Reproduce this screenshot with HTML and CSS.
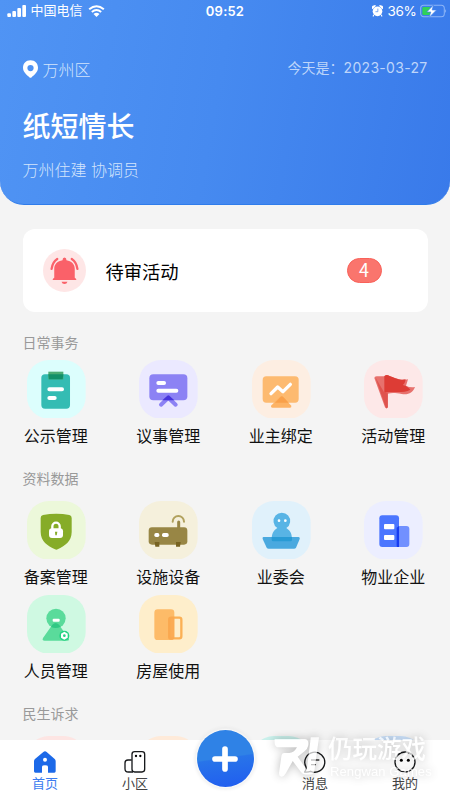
FILE: index.html
```html
<!DOCTYPE html>
<html lang="zh-CN">
<head>
<meta charset="utf-8">
<title>首页</title>
<link rel="stylesheet" href="styles.css">
</head>
<body>
<div class="app">
  <header class="hero">
    <div class="status">
      <div class="status-left">
        <svg class="signal" viewBox="0 0 57 36"><rect x="1" y="25" width="11" height="11" rx="3"/><rect x="16" y="18" width="11" height="18" rx="3"/><rect x="31" y="9" width="11" height="27" rx="3"/><rect x="46" y="0" width="11" height="36" rx="3"/></svg>
        <span class="carrier">中国电信</span>
        <svg class="wifi" viewBox="0 0 50 36"><path d="M3 13Q25-6 47 13M11 21Q25 9 39 21" fill="none" stroke="#fff" stroke-width="6"/><path d="M16 27Q25 19 34 27L25 36Z"/></svg>
      </div>
      <div class="clock">09:52</div>
      <div class="status-right">
        <svg class="alarm" viewBox="0 0 32 34"><circle cx="16" cy="18" r="14"/><path d="M1 8Q1 1 9 2L1 11M31 8Q31 1 23 2L31 11M5 28l-2 5M27 28l2 5" stroke="#fff" stroke-width="3"/><path d="M17 10v9h-7" fill="none" stroke="#4485ed" stroke-width="2"/></svg>
        <span>36%</span>
        <svg class="battery" viewBox="0 0 80 40"><rect x="2" y="3" width="70" height="34" rx="9" fill="none" stroke="#8db5f7" stroke-width="3"/><rect x="7" y="8" width="24" height="24" rx="4" fill="#30d158"/><path d="M75 14q5 6 0 12z" fill="#a6c6fa"/><path d="M40 2L20 23h12l-5 16 22-22H36z" stroke="#4082eb" stroke-width="2"/></svg>
      </div>
    </div>
    <div class="place-row">
      <div class="place"><svg class="pin" viewBox="0 0 48 56"><path fill-rule="evenodd" d="M24 0C9 0 0 11 0 24c0 15 14 24 21 31q3 2 6 0c7-7 21-16 21-31C48 11 39 0 24 0Zm0 15a10 10 0 1 1 0 20 10 10 0 0 1 0-20Z"/></svg><span>万州区</span></div>
      <div class="date">今天是：<span>2023-03-27</span></div>
    </div>
    <h1>纸短情长</h1>
    <p class="role">万州住建 协调员</p>
  </header>

  <main>
    <section class="notice">
      <svg class="bell" viewBox="0 0 130 130"><circle cx="65" cy="65" r="65" fill="#fee6e6"/><path d="M34 87V60c0-15 10-23 25-26q0-8 6-8t6 8c15 3 25 11 25 26v27q5 2 5 7H29q0-5 5-7ZM56 99h18q-2 7-9 7t-9-7Z" fill="#fa6169"/><path d="M43 30Q29 39 26 60M87 30q14 9 17 30" fill="none" stroke="#fa6169" stroke-width="7" stroke-linecap="round"/></svg>
      <span class="notice-name">待审活动</span>
      <span class="count">4</span>
    </section>

    <section class="group first">
      <h2>日常事务</h2>
      <div class="grid">
        <div class="item"><svg class="tile" viewBox="0 0 176 176"><rect width="176" height="176" rx="65" fill="#dcfefd"/><rect x="43" y="43" width="86" height="103" rx="11" fill="#34bcb3"/><path d="M64 35h45v23H64z" fill="#4bab73"/><path d="M64 43h45l-2 15H66z" fill="#129068"/><path d="M67 88h38M67 114h16" class="line" stroke="#fff" stroke-width="12"/></svg><span>公示管理</span></div>
        <div class="item"><svg class="tile" viewBox="0 0 176 176"><rect width="176" height="176" rx="65" fill="#ebe9ff"/><rect x="31" y="43" width="114" height="78" rx="12" fill="#8c82f4"/><path d="M66 134l22-21 22 21" class="line" stroke="#8c82f4" stroke-width="12"/><path d="M70 121l15-14q3-2 6 0l15 14z" fill="#4634dc"/><path d="M58 69h17M58 92h54" class="line" stroke="#fff" stroke-width="12"/></svg><span>议事管理</span></div>
        <div class="item"><svg class="tile" viewBox="0 0 176 176"><rect width="176" height="176" rx="65" fill="#fdeee2"/><rect x="32" y="49" width="108" height="79" rx="11" fill="#fdba70"/><path d="M57 137l27-27q4-3 8 0l26 27q1 6-4 6H61q-5 0-4-6z" fill="#fdb365"/><path d="M69 128l17-18q4-2 7 0l17 18z" fill="#f9a04a"/><path d="M57 101l20-20 16 14 22-22" class="line" stroke="#fff" stroke-width="10"/></svg><span>业主绑定</span></div>
        <div class="item"><svg class="tile" viewBox="0 0 176 176"><rect width="176" height="176" rx="65" fill="#fde8e8"/><path d="M61 49q8-6 16 0c26 9 36 13 55 9l-6 19q12 7 27 4c-7 18-20 24-40 21-17-3-29-4-42-1L72 141q-4 8-9 1L31 54q0-5 7-5z" fill="#e7716d"/><path d="M61 48q7-6 16 0c23 9 33 14 48 10-3 10-3 14-9 17 12 3 18 8 23 14-17 10-42 6-64 7l-14 2z" fill="#dd3c35"/><path d="M34 52l32 93 5-2 1-43-11-2z" fill="#dc4742" opacity=".7"/></svg><span>活动管理</span></div>
      </div>
    </section>

    <section class="group">
      <h2>资料数据</h2>
      <div class="grid">
        <div class="item"><svg class="tile" viewBox="0 0 176 176"><rect width="176" height="176" rx="65" fill="#ecf8da"/><path d="M41 51q0-8 7-9 40-8 79 0 7 1 7 9v42c0 29-21 41-42 52q-4 2-8 0C62 134 41 122 41 93z" fill="#86ac28"/><rect x="66" y="82" width="42" height="29" rx="9" fill="#fff"/><path d="M76 85V76a11 11 0 0 1 22 0v9" fill="none" stroke="#fff" stroke-width="7"/><path d="M84 92h7l-2 11h-4z" fill="#86ac28"/></svg><span>备案管理</span></div>
        <div class="item"><svg class="tile" viewBox="0 0 176 176"><rect width="176" height="176" rx="65" fill="#f5f0dc"/><rect x="29" y="79" width="116" height="52" rx="10" fill="#988645"/><path d="M119 63v20" stroke="#988645" stroke-width="9" class="line"/><path d="M101 62a17 17 0 0 1 34 0" stroke="#b1a15d" stroke-width="6" class="line"/><rect x="46" y="96" width="15" height="12" rx="5" fill="#fff"/><rect x="69" y="96" width="20" height="12" rx="5" fill="#fff"/><path d="M47 123h14v14H49zM111 123h14l-2 14h-12z" fill="#776322"/></svg><span>设施设备</span></div>
        <div class="item"><svg class="tile" viewBox="0 0 176 176"><rect width="176" height="176" rx="65" fill="#e0f1fb"/><path d="M76 81a25 25 0 1 1 27 0c13 9 17 18 17 35q0 5-5 5H64q-5 0-5-5c0-17 5-28 17-35z" fill="#58b4e5"/><path d="M34 108h106q5 1 3 6l-11 26q-2 3-6 3H50q-4 0-6-3l-12-26q-2-5 2-6z" fill="#4aa9df"/><path d="M59 108h61v8q0 5-5 5H64q-5 0-5-5z" fill="#299bd5"/><circle cx="81" cy="59" r="4" fill="#fff"/><circle cx="100" cy="59" r="4" fill="#fff"/></svg><span>业委会</span></div>
        <div class="item"><svg class="tile" viewBox="0 0 176 176"><rect width="176" height="176" rx="65" fill="#eceeff"/><rect x="98" y="75" width="38" height="63" rx="9" fill="#7190ff"/><rect x="46" y="43" width="59" height="95" rx="9" fill="#4b76ff"/><path d="M98 80l7-5v63h-7z" fill="#173df1"/><rect x="60" y="69" width="31" height="16" rx="3" fill="#fff"/><rect x="60" y="102" width="31" height="15" rx="3" fill="#fff"/></svg><span>物业企业</span></div>
        <div class="item"><svg class="tile" viewBox="0 0 176 176"><rect width="176" height="176" rx="65" fill="#cff9e2"/><path d="M76 89q10-10 20 0l28 40q6 8-4 8H53q-9 0-5-8z" fill="#5adb9b"/><circle cx="87" cy="70" r="29" fill="#5adb9b"/><path d="M76 89q10-10 20 0l5 6q-14 7-29 1z" fill="#30c884"/><rect x="77" y="71" width="21" height="9" rx="3" fill="#fff"/><circle cx="112" cy="122" r="15" fill="#25d283"/><path d="M112 110l10 6v12l-10 6-10-6v-12z" fill="#fff"/><circle cx="112" cy="122" r="4" fill="#25d283"/></svg><span>人员管理</span></div>
        <div class="item"><svg class="tile" viewBox="0 0 176 176"><rect width="176" height="176" rx="65" fill="#feeecb"/><rect x="46" y="43" width="60" height="92" rx="10" fill="#fdbb68"/><rect x="91" y="68" width="36" height="62" rx="6" fill="none" stroke="#fbb055" stroke-width="7"/><path d="M87 74q0-9 9-9h10v64q-2 5-8 5h-4q-7 0-7-8z" fill="#f9a64d" opacity=".75"/></svg><span>房屋使用</span></div>
      </div>
    </section>

    <section class="group">
      <h2>民生诉求</h2>
      <div class="grid">
        <div class="item"><svg class="tile" viewBox="0 0 176 176"><rect width="176" height="176" rx="65" fill="#fde5e3"/></svg></div>
        <div class="item"><svg class="tile" viewBox="0 0 176 176"><rect width="176" height="176" rx="65" fill="#feead9"/></svg></div>
        <div class="item"><svg class="tile" viewBox="0 0 176 176"><rect width="176" height="176" rx="65" fill="#c9f0eb"/></svg></div>
        <div class="item"><svg class="tile" viewBox="0 0 176 176"><rect width="176" height="176" rx="65" fill="#c9dff8"/></svg></div>
      </div>
    </section>
  </main>

  <nav class="tabs">
    <div class="tab active"><svg viewBox="0 0 66 66"><path d="M28 3q5-4 10 0l24 21q3 3 3 7v30q0 4-4 4H42V47q0-4-9-4t-9 4v18H4q-4 0-4-4V31q0-4 3-7z" fill="#1c69e8"/><circle cx="33" cy="26" r="6" fill="#fff"/></svg><span>首页</span></div>
    <div class="tab"><svg viewBox="0 0 66 66"><path d="M27 63H13Q3 63 3 53V36q0-9 9-9h11" fill="none" stroke="#17191b" stroke-width="4"/><rect x="24" y="2" width="38" height="61" rx="8" fill="none" stroke="#17191b" stroke-width="4"/><circle cx="36" cy="15" r="3.5"/><circle cx="49" cy="15" r="3.5"/></svg><span>小区</span></div>
    <div class="tab middle"><div class="add"><svg viewBox="0 0 90 90"><path d="M45 15v60M15 45h60" class="line" stroke="#fff" stroke-width="17"/></svg></div></div>
    <div class="tab"><svg viewBox="0 0 66 66"><path d="M6 48A30 30 0 1 1 20 61Q12 64 2 63q5-6 4-15z" fill="none" stroke="#17191b" stroke-width="4"/><path d="M21 27h25M21 41h15" stroke="#333" stroke-width="4"/></svg><span>消息</span></div>
    <div class="tab"><svg viewBox="0 0 66 66"><circle cx="33" cy="33" r="30" fill="none" stroke="#17191b" stroke-width="4"/><circle cx="22" cy="28" r="4.5"/><circle cx="43" cy="28" r="4.5"/></svg><span>我的</span></div>
  </nav>

  <div class="watermark">
    <svg viewBox="0 0 140 124"><path d="M2 6h90q16 1 12 20-2 11-12 18L72 60l31 44q3 10-7 10-8 0-14-8L57 73 36 110q-9 15-18 8-4-3-2-14l7-49q2-7 8-7h15q15 0 24-17H10Q0 28 2 6ZM112 0h25l-14 102q-2 12-16 12h-9z"/></svg>
    <div class="watermark-text"><strong>仍玩游戏</strong><span>Rengwan Games</span></div>
  </div>
</div>
</body>
</html>
```
FILE: styles.css
```css
* {
  box-sizing: border-box;
}

body {
  margin: 0;
  background: #f4f4f4;
  font-family: Inter, "Noto Sans CJK SC", sans-serif;
  color: #111;
}

svg {
  display: block;
  flex: none;
}

.line {
  fill: none;
  stroke-linecap: round;
  stroke-linejoin: round;
}

.app {
  position: relative;
  display: flex;
  flex-direction: column;
  width: 450px;
  height: 800px;
  overflow: hidden;
}

.hero {
  flex: none;
  height: 205px;
  padding: 0 22.5px;
  border-bottom: 1px solid #2f7ceb;
  border-radius: 0 0 24px 24px;
  background: linear-gradient(100deg, #5094f4, #468af0 48%, #397aea);
  color: #fff;
}

.hero svg {
  fill: #fff;
}

.status {
  display: grid;
  grid-template-columns: 1fr auto 1fr;
  align-items: center;
  height: 22px;
  margin: 0 -16px;
  font-size: 13px;
}

.status-left,
.status-right {
  display: flex;
  align-items: center;
}

.status-left {
  gap: 5px;
}

.carrier {
  line-height: 20px;
  margin-top: -2px;
}

.status-right {
  justify-content: flex-end;
  gap: 4px;
  margin-right: -3px;
}

.signal {
  width: 19px;
  height: 12px;
}

.wifi {
  width: 17px;
  height: 12px;
}

.alarm {
  width: 11px;
  height: 12px;
}

.battery {
  width: 27px;
  height: 14px;
  margin-left: -1px;
}

.status-right span {
  font-size: 13.5px;
  letter-spacing: -.3px;
}

.clock {
  font-size: 13px;
  font-weight: 600;
  letter-spacing: .2px;
}

.place-row {
  display: flex;
  justify-content: space-between;
  align-items: center;
  height: 24px;
  margin-top: 35px;
}

.place {
  display: flex;
  align-items: center;
  gap: 5px;
  font-size: 16px;
  font-weight: 300;
  color: #d3e4fc;
}

.pin {
  width: 15px;
  height: 18px;
}

.date {
  margin-top: -3px;
  font-size: 14px;
  line-height: 20px;
  color: #bdd5fa;
}

.date span {
  letter-spacing: .3px;
}

h1 {
  margin: 26px 0 0;
  font-size: 28px;
  line-height: 40px;
  font-weight: 500;
}

.role {
  margin: 10.5px 0 0;
  font-size: 16px;
  line-height: 24px;
  font-weight: 300;
  color: #d3e4fc;
}

main {
  flex: 1;
  min-height: 0;
  overflow: hidden;
  padding-top: 24px;
}

.notice {
  display: flex;
  align-items: center;
  height: 83px;
  margin: 0 22.5px;
  padding: 0 46px 0 20px;
  border-radius: 12px;
  background: #fff;
}

.bell {
  width: 43px;
  height: 43px;
}

.notice-name {
  margin-left: 20px;
  font-size: 18.3px;
  color: #000;
}

.count {
  width: 35px;
  height: 25px;
  margin-left: auto;
  border: 1px solid #f96159;
  border-radius: 13px;
  background: #fa756d;
  color: #fff;
  font: 18px/21px "Noto Sans CJK SC", sans-serif;
  text-align: center;
}

.group {
  padding-top: 21px;
}

.group h2 {
  margin: 0 0 12px 22.5px;
  font-size: 14px;
  line-height: 20px;
  font-weight: 400;
  color: #999;
}

.group.first h2 {
  margin-bottom: 6.5px;
}

.grid {
  display: grid;
  grid-template-columns: repeat(4, 1fr);
  row-gap: 6px;
}

.item {
  display: flex;
  flex-direction: column;
  align-items: center;
  gap: 6px;
  height: 88px;
  font-size: 16px;
  line-height: 24px;
}

.item span {
  margin-right: 1px;
}

.tile {
  width: 58.7px;
  height: 58.7px;
}

.tabs {
  display: grid;
  grid-template-columns: repeat(5, 1fr);
  flex: none;
  height: 60px;
  background: #fff;
}

.tab {
  display: flex;
  flex-direction: column;
  align-items: center;
  padding-top: 11px;
  font-size: 13px;
  line-height: 20px;
  color: #444;
}

.tab > svg {
  width: 22px;
  height: 22px;
}

.active {
  color: #3b7cf0;
}

.tab.middle {
  padding: 0;
  margin-top: -10px;
}

.add {
  display: grid;
  place-items: center;
  width: 57px;
  height: 57px;
  border-radius: 50%;
  background: linear-gradient(172deg, #2f82e6 0 48%, #2874e9 50%, #205cf0);
  box-shadow: 0 0 2px 1px #fff, 0 0 4px 1px #ddd;
}

.add svg {
  width: 30px;
  height: 30px;
}

/* translucent stamp over the tab bar */
.watermark {
  position: absolute;
  left: 274px;
  top: 737px;
  display: flex;
  gap: 8px;
  color: #fff;
  opacity: .7;
  filter: drop-shadow(0 0 5px rgba(0, 0, 0, .38));
}

.watermark svg {
  width: 46px;
  height: 41px;
  fill: #fff;
}

.watermark-text {
  display: flex;
  flex-direction: column;
}

.watermark strong {
  font-size: 24.5px;
  line-height: 24px;
  font-weight: 500;
}

.watermark span {
  margin: 3px 0 0 2px;
  font: 13px/15px "Liberation Sans", sans-serif;
  letter-spacing: .1px;
}
```
